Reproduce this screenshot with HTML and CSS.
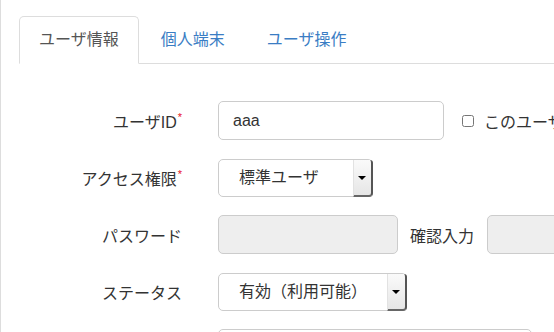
FILE: index.html
```html
<!DOCTYPE html>
<html lang="ja">
<head>
  <meta charset="UTF-8">
  <title>ユーザ情報</title>
  <link rel="stylesheet" href="styles.css">
</head>
<body>
<div class="panel">
  <ul class="tabs">
    <li class="tab active">ユーザ情報</li>
    <li class="tab">個人端末</li>
    <li class="tab">ユーザ操作</li>
  </ul>

  <div class="form">
    <div class="row">
      <label class="label">ユーザID<span class="req">*</span></label>
      <input type="text" class="input w-id" value="aaa">
      <label class="check"><input type="checkbox"> このユーザを無効にする</label>
    </div>

    <div class="row">
      <label class="label">アクセス権限<span class="req">*</span></label>
      <div class="select w-role">
        <select><option>標準ユーザ</option></select>
      </div>
    </div>

    <div class="row">
      <label class="label">パスワード</label>
      <input type="password" class="input w-pass" disabled>
      <span class="sub-label">確認入力</span>
      <input type="password" class="input w-pass" disabled>
    </div>

    <div class="row">
      <label class="label">ステータス</label>
      <div class="select w-status">
        <select><option>有効（利用可能）</option></select>
      </div>
    </div>

    <div class="row">
      <label class="label"></label>
      <input type="text" class="input w-last">
    </div>
  </div>
</div>
</body>
</html>
```

FILE: styles.css
```css
body {
  margin: 0;
  font-family: 'Liberation Sans', 'Noto Sans CJK JP', sans-serif;
  font-size: 16px;
  color: #333;
  background: #fff;
  overflow: hidden;
}

.panel {
  border-left: 1px solid #ddd;
  height: 100vh;
  padding: 16px 0 0 18px;
  overflow: hidden;
}

.tabs {
  display: flex;
  margin: 0;
  padding: 0;
  list-style: none;
  border-bottom: 1px solid #ddd;
}

.tab {
  padding: 0 19px;
  height: 46px;
  line-height: 46px;
  margin-right: 2px;
  margin-bottom: -1px;
  color: #3a7dc4;
  border: 1px solid transparent;
  border-radius: 5px 5px 0 0;
}

.tab.active {
  color: #555;
  border-color: #ddd;
  border-bottom-color: #fff;
  background: #fff;
}

.form {
  padding-top: 37px;
}

.row {
  display: flex;
  align-items: center;
  height: 39px;
  margin-bottom: 18px;
}

.label {
  flex-shrink: 0;
  width: 163px;
  text-align: right;
  margin-right: 36px;
  color: #333;
  white-space: nowrap;
}

.req {
  color: #e8101e;
  font-size: 11px;
  vertical-align: 7px;
  margin-left: 1px;
}

.input {
  box-sizing: border-box;
  height: 39px;
  border: 1px solid #ccc;
  border-radius: 5px;
  padding: 0 14px;
  font-family: inherit;
  font-size: 16px;
  color: #333;
  background: #fff;
  flex-shrink: 0;
}

.input:disabled {
  background: #eee;
}

.w-id { width: 226px; }
.w-pass { width: 180px; }
.w-last { width: 314px; }

.check {
  display: flex;
  align-items: center;
  margin-left: 18px;
  white-space: nowrap;
  flex-shrink: 0;
}

.check input {
  width: 12px;
  height: 12px;
  margin: 0 10px 0 0;
}

.sub-label {
  flex-shrink: 0;
  margin: 0 13px 0 12px;
  white-space: nowrap;
}

.select {
  position: relative;
  height: 38px;
  flex-shrink: 0;
}

.select select {
  box-sizing: border-box;
  width: 100%;
  height: 100%;
  appearance: none;
  -webkit-appearance: none;
  border: 1px solid #ccc;
  border-radius: 5px;
  padding: 0 20px;
  font-family: inherit;
  font-size: 16px;
  color: #333;
  background: #fff;
}

.select::after {
  content: "";
  position: absolute;
  top: 1px;
  right: 0;
  bottom: 0;
  width: 17px;
  background: linear-gradient(#fafafa, #e6e6e6);
  border-left: 1px solid #e2e2e2;
  border-right: 2px solid #555;
  border-bottom: 2px solid #666;
  border-radius: 0 3px 4px 0;
}

.select::before {
  content: "";
  position: absolute;
  top: 17px;
  right: 7px;
  border-left: 4px solid transparent;
  border-right: 4px solid transparent;
  border-top: 4px solid #000;
  z-index: 1;
}

.w-role { width: 155px; }
.w-status { width: 189px; }
```
